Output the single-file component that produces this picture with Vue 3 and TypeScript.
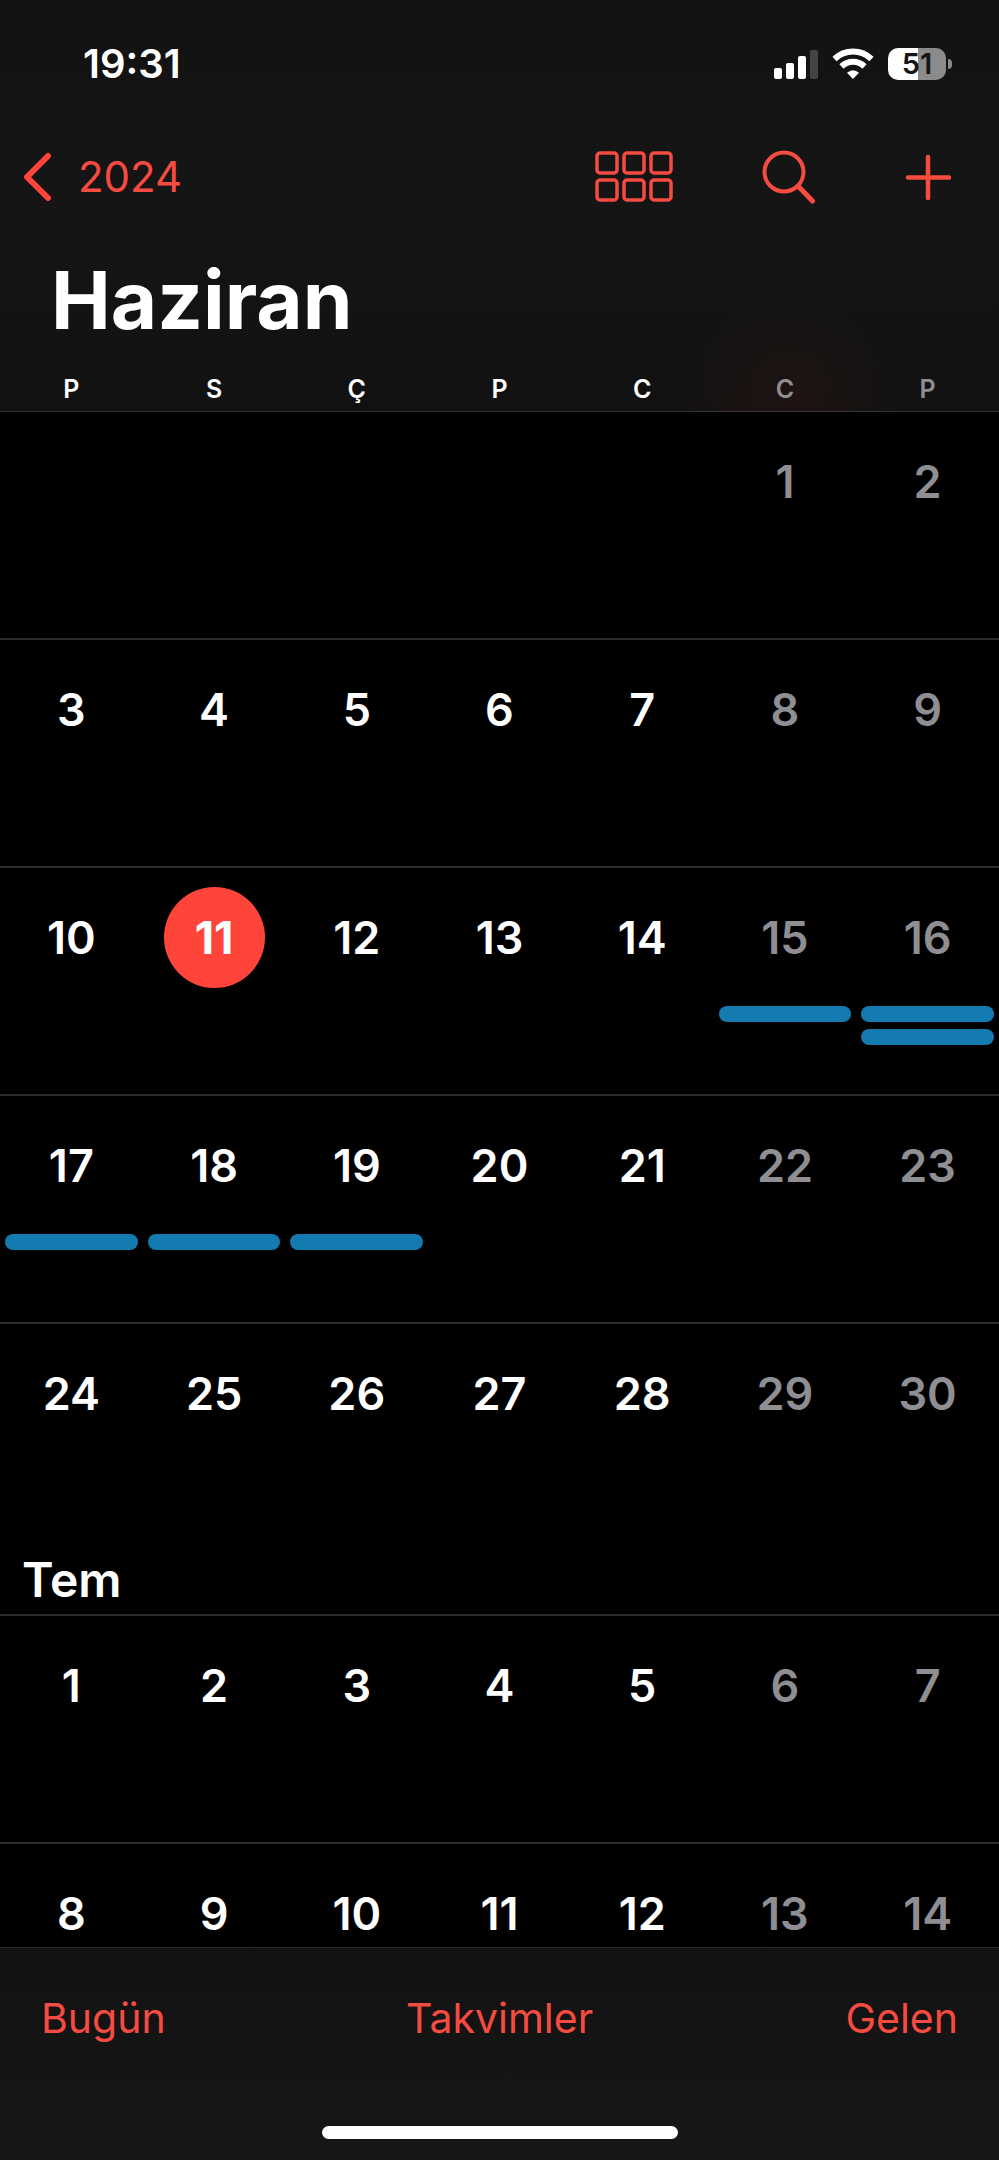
<script setup lang="ts">
interface Day {
  n: number
  weekend: boolean
  today: boolean
  events: number
}

interface Week {
  id: string
  offset: number
  days: Day[]
}

const weekdays = [
  { short: 'P', name: 'Pazartesi' },
  { short: 'S', name: 'Salı' },
  { short: 'Ç', name: 'Çarşamba' },
  { short: 'P', name: 'Perşembe' },
  { short: 'C', name: 'Cuma' },
  { short: 'C', name: 'Cumartesi' },
  { short: 'P', name: 'Pazar' },
]

const juneEvents: Record<number, number> = { 15: 1, 16: 2, 17: 1, 18: 1, 19: 1 }

function buildWeeks(
  id: string,
  length: number,
  firstColumn: number,
  events: Record<number, number> = {},
  today = 0,
): Week[] {
  const weeks: Week[] = []
  for (let n = 1; n <= length; n++) {
    const column = (firstColumn + n - 1) % 7
    if (n === 1 || column === 0) {
      weeks.push({ id: `${id}-${weeks.length}`, offset: column, days: [] })
    }
    weeks[weeks.length - 1].days.push({
      n,
      weekend: column > 4,
      today: n === today,
      events: events[n] ?? 0,
    })
  }
  return weeks
}

const june = buildWeeks('haziran', 30, 5, juneEvents, 11)
const july = buildWeeks('temmuz', 14, 0)

const months = [
  { id: 'haziran', label: '', weeks: june },
  { id: 'temmuz', label: 'Tem', weeks: july },
]

const tiles = [0, 1, 2, 3, 4, 5].map((i) => ({
  x: 2 + (i % 3) * 27,
  y: 2 + Math.floor(i / 3) * 27,
}))
</script>

<template>
  <div class="screen">
    <header class="top">
      <div class="status">
        <time class="clock">19:31</time>
        <div class="indicators">
          <svg class="signal" viewBox="0 0 44 32" aria-hidden="true">
            <rect x="0" y="20" width="8" height="11" rx="2" />
            <rect x="12" y="15" width="8" height="16" rx="2" />
            <rect x="24" y="8" width="8" height="23" rx="2" />
            <rect class="off" x="36" y="2" width="8" height="29" rx="2" />
          </svg>
          <svg class="wifi" viewBox="0 0 42 32" aria-hidden="true">
            <path d="M2.500 11a26.500 26.500 0 0 1 37 0" />
            <path d="M9.500 18.500a16.500 16.500 0 0 1 23 0" />
            <path class="dot" d="M21 31l-6-6.2q6-5.200 12 0z" />
          </svg>
          <div class="battery">
            <span class="level">51</span>
            <span class="nub"></span>
          </div>
        </div>
      </div>

      <nav class="nav">
        <button class="back" type="button">
          <svg class="chevron" viewBox="0 0 28 50" aria-hidden="true">
            <path d="M25 4L4 25l21 21" />
          </svg>
          <span>2024</span>
        </button>
        <div class="actions">
          <button type="button" aria-label="Görünüm">
            <svg class="tiles" viewBox="0 0 78 52" aria-hidden="true">
              <rect
                v-for="(t, i) in tiles"
                :key="i"
                :x="t.x"
                :y="t.y"
                width="20"
                height="20"
                rx="3"
              />
            </svg>
          </button>
          <button type="button" aria-label="Ara">
            <svg class="search" viewBox="0 0 54 54" aria-hidden="true">
              <circle cx="22" cy="22" r="19.500" />
              <path d="M36 36L50.500 51" />
            </svg>
          </button>
          <button type="button" aria-label="Ekle">
            <svg class="plus" viewBox="0 0 46 46" aria-hidden="true">
              <path d="M23 3v41M3 23.500h41" />
            </svg>
          </button>
        </div>
      </nav>

      <h1 class="title">Haziran</h1>

      <div class="weekdays">
        <abbr
          v-for="(d, i) in weekdays"
          :key="d.name"
          :class="{ weekend: i > 4 }"
          :aria-label="d.name"
          >{{ d.short }}</abbr
        >
      </div>
    </header>

    <main class="calendar">
      <section v-for="m in months" :key="m.id" class="month">
        <h2 v-if="m.label" class="month-label">{{ m.label }}</h2>
        <div v-for="w in m.weeks" :key="w.id" class="week">
          <span v-for="b in w.offset" :key="`blank-${b}`" class="blank"></span>
          <button
            v-for="d in w.days"
            :key="d.n"
            type="button"
            class="day"
            :class="{ weekend: d.weekend, today: d.today }"
          >
            <span class="number">{{ d.n }}</span>
            <span v-for="e in d.events" :key="e" class="event"></span>
          </button>
        </div>
      </section>
    </main>

    <footer class="bottom">
      <div class="toolbar">
        <button type="button">Bugün</button>
        <button type="button">Takvimler</button>
        <button type="button">Gelen</button>
      </div>
      <div class="home"></div>
    </footer>
  </div>
</template>

<style>
html,
body {
  background: #000;
}
</style>

<style scoped>
.screen {
  --red: #ff453a;
  --bar-red: #f54b40;
  --grey: #8e8e93;
  --line: #2c2c2e;
  display: flex;
  flex-direction: column;
  height: 100vh;
  background: #000;
  color: #fff;
  font-family: Inter, "Liberation Sans", sans-serif;
}

button {
  margin: 0;
  padding: 0;
  border: 0;
  background: none;
  color: inherit;
  font: inherit;
  cursor: pointer;
}

svg {
  display: block;
}

.top {
  flex: none;
  border-bottom: 1px solid #333335;
  background:
    radial-gradient(circle 120px at 79% 100%, rgba(255, 60, 40, 0.06), transparent),
    linear-gradient(#121212, #151515 50%, #111);
}

.status {
  display: flex;
  align-items: center;
  justify-content: space-between;
  height: 128px;
  padding: 0 47px 0 83px;
}

.clock {
  font-size: 40px;
  font-weight: 600;
  line-height: 48px;
}

.indicators {
  display: flex;
  align-items: center;
  gap: 14px;
}

.signal {
  width: 44px;
  height: 32px;
  fill: #fff;
}

.signal .off {
  fill: #444;
}

.wifi {
  width: 42px;
  height: 32px;
  fill: none;
  stroke: #fff;
  stroke-width: 6;
}

.wifi .dot {
  fill: #fff;
  stroke: none;
}

.battery {
  display: flex;
  align-items: center;
  gap: 2px;
}

.level {
  width: 58px;
  border-radius: 10px;
  background: linear-gradient(90deg, #fff 52%, #8b8b8b 52%);
  color: #151515;
  font-size: 29px;
  font-weight: 600;
  line-height: 32px;
  text-align: center;
}

.nub {
  width: 4px;
  height: 10px;
  border-radius: 0 4px 4px 0;
  background: #8b8b8b;
}

.nav {
  display: flex;
  align-items: center;
  justify-content: space-between;
  height: 98px;
  padding: 0 48px 0 23px;
  color: var(--bar-red);
}

.back {
  display: flex;
  align-items: center;
  gap: 27px;
  font-size: 42px;
  line-height: 52px;
}

.nav svg {
  fill: none;
  stroke: currentColor;
  stroke-linecap: round;
  stroke-linejoin: round;
}

.chevron {
  width: 28px;
  height: 50px;
  color: var(--red);
  stroke-width: 6;
}

.actions {
  display: flex;
  align-items: center;
  gap: 89px;
}

.tiles {
  width: 78px;
  height: 52px;
  stroke-width: 3.5;
}

.search {
  width: 54px;
  height: 54px;
  stroke-width: 4;
}

.search path {
  stroke-width: 5;
}

.plus {
  width: 46px;
  height: 46px;
  stroke-width: 4.5;
}

.title {
  margin: 0;
  padding: 0 51px;
  font-size: 80px;
  font-weight: 700;
  line-height: 148px;
}

.weekdays {
  display: grid;
  grid-template-columns: repeat(7, 1fr);
  padding-bottom: 7px;
  font-size: 25px;
  font-weight: 600;
  line-height: 30px;
  text-align: center;
}

.weekend {
  color: var(--grey);
}

.calendar {
  flex: 1;
  min-height: 0;
  overflow-y: auto;
  scrollbar-width: none;
}

.month-label {
  margin: 0;
  padding: 0 22px 4px;
  font-size: 48px;
  font-weight: 600;
  line-height: 60px;
}

.week {
  display: grid;
  grid-template-columns: repeat(7, 1fr);
  min-height: 226px;
  border-top: 2px solid var(--line);
}

.month:first-child .week:first-child {
  border-top: 0;
}

.day {
  display: flex;
  flex-direction: column;
  align-items: center;
  padding: 19px 5px 0;
  font-size: 45px;
  font-weight: 600;
}

.number {
  width: 101px;
  margin-bottom: 18px;
  border-radius: 50%;
  line-height: 101px;
  text-align: center;
}

.today .number {
  background: var(--red);
  font-weight: 700;
}

.event {
  align-self: stretch;
  height: 16px;
  margin-bottom: 7px;
  border-radius: 8px;
  background: #147bb0;
}

.bottom {
  flex: none;
  border-top: 1px solid #2a2a2a;
  background: linear-gradient(#121212, #171717);
}

.toolbar {
  display: grid;
  grid-template-columns: 1fr auto 1fr;
  align-items: center;
  height: 139px;
  padding: 0 41px;
  color: var(--bar-red);
  font-size: 41px;
  line-height: 52px;
}

.toolbar button:first-child {
  justify-self: start;
}

.toolbar button:last-child {
  justify-self: end;
}

.home {
  width: 356px;
  height: 13px;
  margin: 39px auto 21px;
  border-radius: 7px;
  background: #fff;
}
</style>
